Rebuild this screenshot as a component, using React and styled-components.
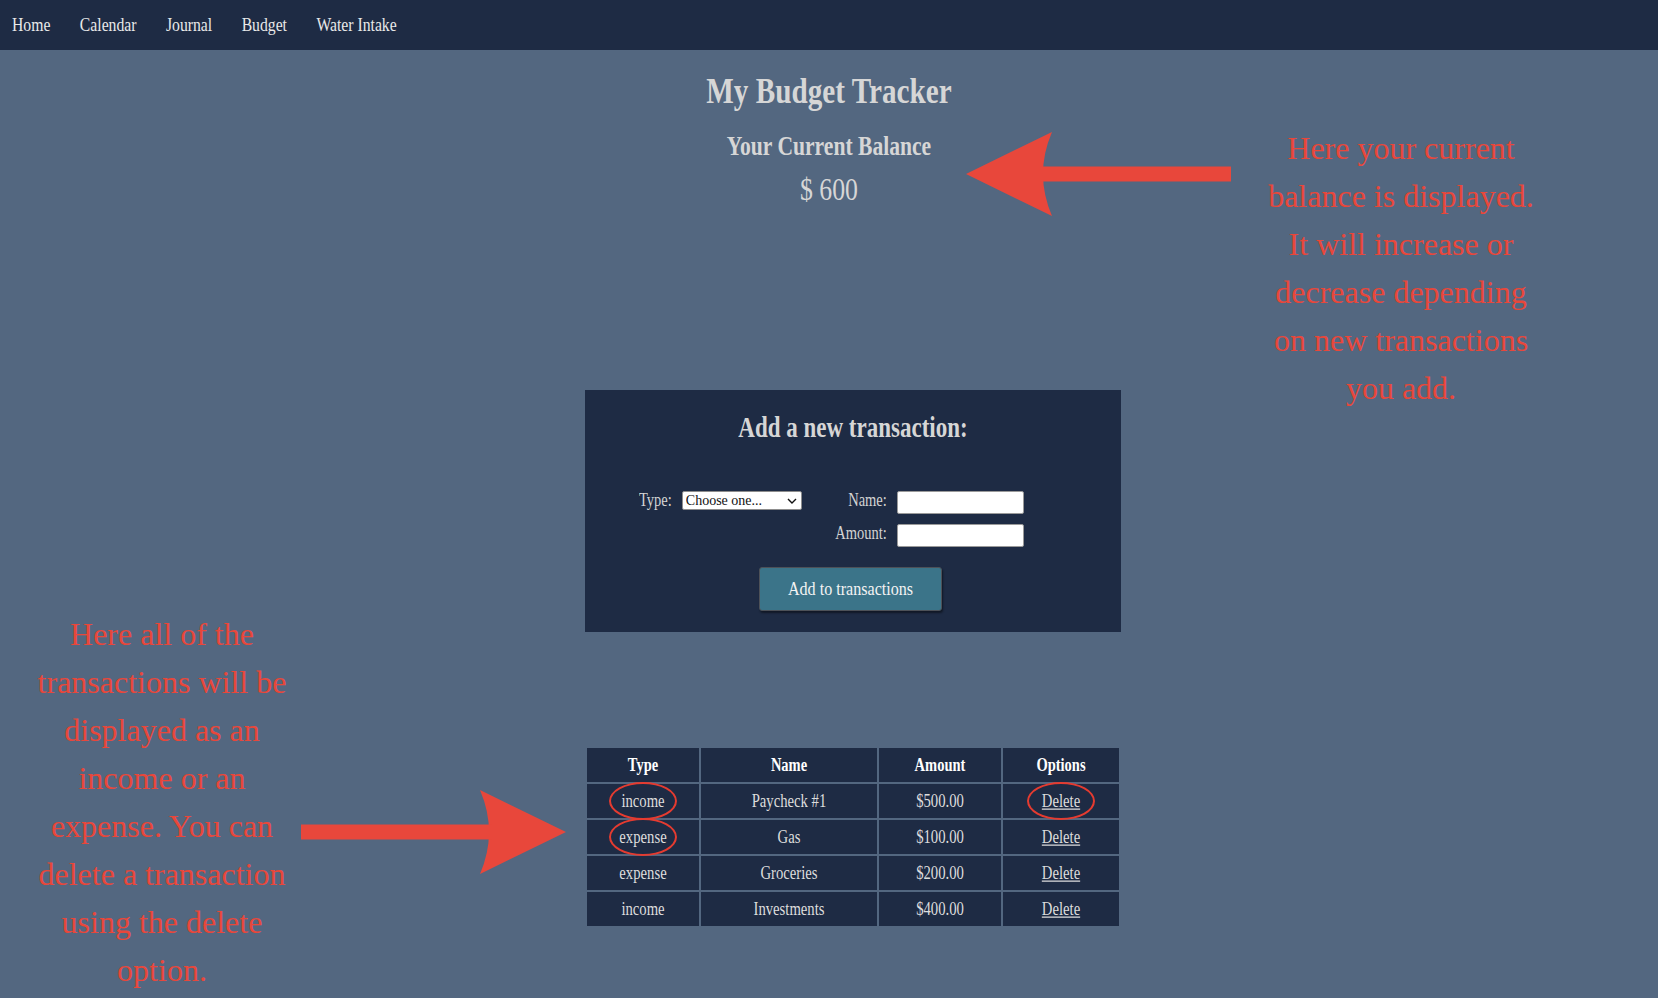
import React from "react";
import styled, { createGlobalStyle, css } from "styled-components";

const GlobalStyle = createGlobalStyle`
  html, body { margin: 0; padding: 0; background: #536780; }
  body { font-family: "Liberation Serif", "Times New Roman", serif; }
  * { box-sizing: border-box; }
`;

const tall = (k) => css`
  display: inline-block;
  transform: scaleY(${k});
`;

const Page = styled.div`
  position: relative;
  min-height: 100vh;
  overflow: hidden;
`;

const Nav = styled.nav`
  height: 50px;
  background: #1e2b44;
  display: flex;
  align-items: center;
  gap: 29.5px;
  padding-left: 12px;
`;

const NavLink = styled.a`
  font-size: 15.7px;
  line-height: 20px;
  color: #e9e9e9;
  text-decoration: none;
  ${tall(1.25)}
`;

const Main = styled.main`
  display: flex;
  flex-direction: column;
  align-items: center;
  padding-top: 20.5px;
  padding-bottom: 40px;
`;

const Title = styled.h1`
  margin: 0;
  font-size: 29.2px;
  line-height: 40px;
  font-weight: 700;
  color: #d6d6d6;
  ${tall(1.2)}
`;

const Subtitle = styled.h2`
  margin: 20.5px 0 0;
  font-size: 21.6px;
  line-height: 30px;
  font-weight: 700;
  color: #d6d6d6;
  ${tall(1.25)}
`;

const Balance = styled.div`
  margin-top: 10.5px;
  font-size: 25.8px;
  line-height: 36px;
  color: #d6d6d6;
  ${tall(1.2)}
`;

const Column = styled.div`
  width: 536px;
  margin-left: 48px;
  margin-top: 182.5px;
  display: flex;
  flex-direction: column;
`;

const Panel = styled.section`
  background: #1e2b44;
  padding: 22.5px 0 21px;
  display: flex;
  flex-direction: column;
`;

const PanelTitle = styled.h3`
  margin: 0;
  align-self: center;
  font-size: 23px;
  line-height: 30px;
  font-weight: 700;
  color: #d6d6d6;
  ${tall(1.25)}
`;

const Form = styled.div`
  display: flex;
  align-items: flex-start;
  margin-top: 48.5px;
  padding-left: 54px;
`;

const TypeGroup = styled.div`
  display: flex;
  align-items: center;
  gap: 10px;
  height: 19px;
`;

const Label = styled.label`
  font-size: 14.5px;
  line-height: 19px;
  color: #d3d3d3;
  text-align: ${(p) => (p.$right ? "right" : "left")};
  align-self: start;
  ${tall(1.25)}
`;

const SelectWrap = styled.div`
  position: relative;
  width: 120px;
  height: 19px;
`;

const Select = styled.select`
  appearance: none;
  -webkit-appearance: none;
  width: 100%;
  height: 100%;
  margin: 0;
  padding: 0 0 0 3px;
  background: #ffffff;
  border: 1px solid #8d8d8d;
  border-radius: 2px;
  font-family: "Liberation Serif", serif;
  font-size: 14px;
  color: #111;
`;

const Chevron = styled.svg`
  position: absolute;
  right: 5px;
  top: 7px;
  width: 10px;
  height: 6px;
  pointer-events: none;
`;

const Fields = styled.div`
  display: grid;
  grid-template-columns: 52px 127px;
  column-gap: 10px;
  row-gap: 10px;
  margin-left: 33px;
`;

const Input = styled.input`
  width: 127px;
  height: 23px;
  margin: 0;
  background: #ffffff;
  border: 1px solid #9a9a9a;
  border-radius: 2px;
`;

const Button = styled.button`
  align-self: center;
  margin: 20px 5px 0 0;
  width: 183px;
  height: 44px;
  background: #3b7489;
  border: 1px solid #4d5158;
  border-radius: 3px;
  box-shadow: 1px 2px 2px rgba(0, 0, 0, 0.45);
  color: #f3f3f3;
  font-family: "Liberation Serif", serif;
  font-size: 16.1px;
  padding: 0;
`;

const ButtonText = styled.span`
  line-height: 20px;
  ${tall(1.22)}
`;

const Table = styled.table`
  width: 536px;
  margin-top: 114px;
  border-collapse: separate;
  border-spacing: 2px;
  table-layout: fixed;
`;

const Th = styled.th`
  background: #1e2b44;
  height: 34px;
  padding: 0;
  font-size: 14.5px;
  font-weight: 700;
  color: #ffffff;
  text-align: center;
  vertical-align: middle;
`;

const Td = styled.td`
  background: #1e2b44;
  height: 34px;
  padding: 0;
  font-size: 14.7px;
  color: #dddddd;
  text-align: center;
  vertical-align: middle;
`;

const CellText = styled.span`
  line-height: 20px;
  ${tall(1.25)}
`;

const DeleteLink = styled.a`
  color: #dddddd;
  text-decoration: underline;
  line-height: 20px;
  ${tall(1.25)}
`;

const Circled = styled.span`
  position: relative;
  display: inline-block;
  &::after {
    content: "";
    position: absolute;
    left: 50%;
    top: 50%;
    width: 64px;
    height: 34px;
    transform: translate(-50%, -50%);
    border: 2px solid #e53b30;
    border-radius: 50%;
  }
`;

const Callout = styled.p`
  position: absolute;
  left: ${(p) => p.$x}px;
  top: ${(p) => p.$y}px;
  width: 320px;
  margin: 0;
  text-align: center;
  font-size: 32px;
  line-height: 48px;
  color: #e8473b;
`;

const ArrowSvg = styled.svg`
  position: absolute;
  left: ${(p) => p.$x}px;
  top: ${(p) => p.$y}px;
  width: 265px;
  height: 87px;
  transform: ${(p) => (p.$flip ? "scaleX(-1)" : "none")};
`;

function Arrow({ x, y, flip }) {
  return (
    <ArrowSvg $x={x} $y={y} $flip={flip} viewBox="0 0 265 87">
      <path d="M0 43 L86 1 Q68 43 86 85 Z" fill="#e8473b" />
      <rect x="74" y="35.5" width="191" height="15" fill="#e8473b" />
    </ArrowSvg>
  );
}

const rows = [
  { type: "income", name: "Paycheck #1", amount: "$500.00", ct: true, cd: true },
  { type: "expense", name: "Gas", amount: "$100.00", ct: true },
  { type: "expense", name: "Groceries", amount: "$200.00" },
  { type: "income", name: "Investments", amount: "$400.00" },
];

export default function App() {
  return (
    <Page>
      <GlobalStyle />
      <Nav>
        <NavLink href="#">Home</NavLink>
        <NavLink href="#">Calendar</NavLink>
        <NavLink href="#">Journal</NavLink>
        <NavLink href="#">Budget</NavLink>
        <NavLink href="#">Water Intake</NavLink>
      </Nav>
      <Main>
        <Title>My Budget Tracker</Title>
        <Subtitle>Your Current Balance</Subtitle>
        <Balance>$ 600</Balance>
        <Column>
          <Panel>
            <PanelTitle>Add a new transaction:</PanelTitle>
            <Form>
              <TypeGroup>
                <Label>Type:</Label>
                <SelectWrap>
                  <Select defaultValue="">
                    <option value="">Choose one...</option>
                    <option value="income">income</option>
                    <option value="expense">expense</option>
                  </Select>
                  <Chevron viewBox="0 0 10 6">
                    <polyline points="1,1 5,5 9,1" fill="none" stroke="#111" strokeWidth="1.4" />
                  </Chevron>
                </SelectWrap>
              </TypeGroup>
              <Fields>
                <Label $right>Name:</Label>
                <Input type="text" />
                <Label $right>Amount:</Label>
                <Input type="text" />
              </Fields>
            </Form>
            <Button>
              <ButtonText>Add to transactions</ButtonText>
            </Button>
          </Panel>
          <Table>
            <colgroup>
              <col style={{ width: 112 }} />
              <col style={{ width: 176 }} />
              <col style={{ width: 122 }} />
              <col style={{ width: 116 }} />
            </colgroup>
            <thead>
              <tr>
                <Th><CellText>Type</CellText></Th>
                <Th><CellText>Name</CellText></Th>
                <Th><CellText>Amount</CellText></Th>
                <Th><CellText>Options</CellText></Th>
              </tr>
            </thead>
            <tbody>
              {rows.map((r, i) => (
                <tr key={i}>
                  <Td>
                    {r.ct ? (
                      <Circled><CellText>{r.type}</CellText></Circled>
                    ) : (
                      <CellText>{r.type}</CellText>
                    )}
                  </Td>
                  <Td><CellText>{r.name}</CellText></Td>
                  <Td><CellText>{r.amount}</CellText></Td>
                  <Td>
                    {r.cd ? (
                      <Circled><DeleteLink href="#">Delete</DeleteLink></Circled>
                    ) : (
                      <DeleteLink href="#">Delete</DeleteLink>
                    )}
                  </Td>
                </tr>
              ))}
            </tbody>
          </Table>
        </Column>
      </Main>

      <Callout $x={1241} $y={124}>
        Here your current<br />
        balance is displayed.<br />
        It will increase or<br />
        decrease depending<br />
        on new transactions<br />
        you add.
      </Callout>
      <Arrow x={966} y={131} />

      <Callout $x={2} $y={610}>
        Here all of the<br />
        transactions will be<br />
        displayed as an<br />
        income or an<br />
        expense. You can<br />
        delete a transaction<br />
        using the delete<br />
        option.
      </Callout>
      <Arrow x={301} y={789} flip />
    </Page>
  );
}
